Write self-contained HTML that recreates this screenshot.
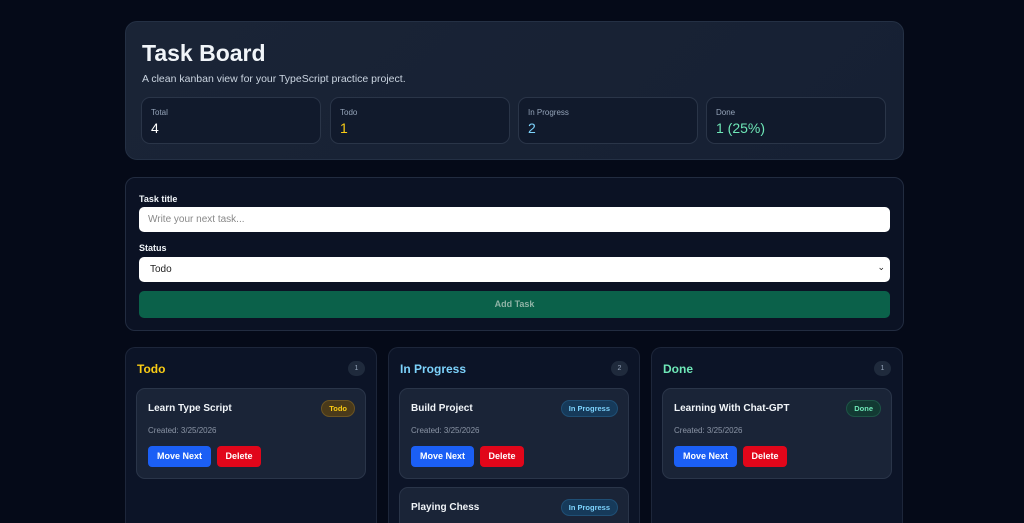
<!DOCTYPE html>
<html><head><meta charset="utf-8"><style>
*{box-sizing:border-box;margin:0;padding:0}
html{width:1024px;height:523px;overflow:hidden;background:#050a18}
body{width:1024px;height:523px;overflow:hidden;background:#050a18;font-family:"Liberation Sans",sans-serif;color:#e5e7eb;position:relative}
.abs{position:absolute}
.hdr{left:125px;top:21px;width:779px;height:139px;border-radius:12px;background:linear-gradient(135deg,#1a2436,#162033);border:1px solid #243044}
.hdr h1{position:absolute;left:16px;top:18px;font-size:23px;font-weight:bold;color:#f1f5f9}
.hdr p{position:absolute;left:16px;top:51px;font-size:10.5px;color:#cbd5e1}
.stat{top:75px;width:180px;height:47px;border:1px solid #2a3548;border-radius:9px;background:#111a2c}
.stat .l{position:absolute;left:9px;top:10px;font-size:8px;color:#94a3b8}
.stat .v{position:absolute;left:9px;top:22px;font-size:14px}
.form{left:125px;top:177px;width:779px;height:154px;border-radius:10px;background:#0b1224;border:1px solid #222c40}
.lab{position:absolute;left:13px;font-size:9px;font-weight:bold;color:#f1f5f9}
.inp{position:absolute;left:13px;width:751px;height:25px;background:#fff;border-radius:5px;font-size:10px;padding:7px 9px;color:#888}
.btn{position:absolute;left:13px;top:113px;width:751px;height:27px;background:#0b614a;border-radius:5px;text-align:center;font-size:9px;font-weight:bold;color:#8fb3a6;line-height:27px}
.col{top:347px;width:252px;height:176px;border-radius:10px 10px 0 0;background:#0c1427;border:1px solid #1d263a;border-bottom:none;overflow:hidden}
.col h2{position:absolute;left:11px;top:14px;font-size:12px;font-weight:bold}
.cnt{position:absolute;right:11px;top:13px;width:17px;height:15px;border-radius:8px;background:#1f2a3c;font-size:7px;color:#94a3b8;text-align:center;line-height:15px}
.card{position:absolute;left:10px;width:230px;height:91px;border-radius:9px;background:#1a2437;border:1px solid #2a3549}
.card .t{position:absolute;left:11px;top:14px;font-size:10px;font-weight:bold;color:#f1f5f9}
.card .d{position:absolute;left:11px;top:37px;font-size:8px;color:#8b95a6}
.b{position:absolute;top:57px;height:21px;border-radius:4px;font-size:9px;font-weight:bold;color:#fff;line-height:21px;text-align:center}
.mv{left:11px;width:63px;background:#1b5ff5}
.dl{left:80px;width:44px;background:#e1061a}
.tag{position:absolute;right:10px;top:11px;height:17px;border-radius:9px;font-size:7.5px;font-weight:bold;line-height:15px;padding:0 7px}
</style></head><body>
<div class="abs hdr"><h1>Task Board</h1><p>A clean kanban view for your TypeScript practice project.</p>
<div class="abs stat" style="left:15px"><span class="l">Total</span><span class="v" style="color:#fff">4</span></div>
<div class="abs stat" style="left:204px"><span class="l">Todo</span><span class="v" style="color:#facc15">1</span></div>
<div class="abs stat" style="left:392px"><span class="l">In Progress</span><span class="v" style="color:#7dd3fc">2</span></div>
<div class="abs stat" style="left:580px"><span class="l">Done</span><span class="v" style="color:#6ee7b7">1 (25%)</span></div>
</div>
<div class="abs form">
<div class="lab" style="top:16px">Task title</div>
<div class="inp" style="top:29px">Write your next task...</div>
<div class="lab" style="top:65px">Status</div>
<div class="inp" style="top:79px;color:#222;padding-left:11px">Todo<span style="position:absolute;right:5px;top:5px;font-size:9px">&#8964;</span></div>
<div class="btn">Add Task</div>
</div>
<div class="abs col" style="left:125px"><h2 style="color:#facc15">Todo</h2><div class="cnt">1</div>
<div class="card" style="top:40px"><div class="t">Learn Type Script</div><div class="tag" style="background:#4a3a1a;border:1px solid #6b5422;color:#facc15">Todo</div><div class="d">Created: 3/25/2026</div><div class="b mv">Move Next</div><div class="b dl">Delete</div></div></div>
<div class="abs col" style="left:388px"><h2 style="color:#7dd3fc">In Progress</h2><div class="cnt">2</div>
<div class="card" style="top:40px"><div class="t">Build Project</div><div class="tag" style="background:#163a5a;border:1px solid #1f4f75;color:#7dd3fc">In Progress</div><div class="d">Created: 3/25/2026</div><div class="b mv">Move Next</div><div class="b dl">Delete</div></div>
<div class="card" style="top:139px"><div class="t">Playing Chess</div><div class="tag" style="background:#163a5a;border:1px solid #1f4f75;color:#7dd3fc">In Progress</div></div></div>
<div class="abs col" style="left:651px"><h2 style="color:#6ee7b7">Done</h2><div class="cnt">1</div>
<div class="card" style="top:40px"><div class="t">Learning With Chat-GPT</div><div class="tag" style="background:#123a33;border:1px solid #1d5446;color:#6ee7b7">Done</div><div class="d">Created: 3/25/2026</div><div class="b mv">Move Next</div><div class="b dl">Delete</div></div></div>
</body></html>
